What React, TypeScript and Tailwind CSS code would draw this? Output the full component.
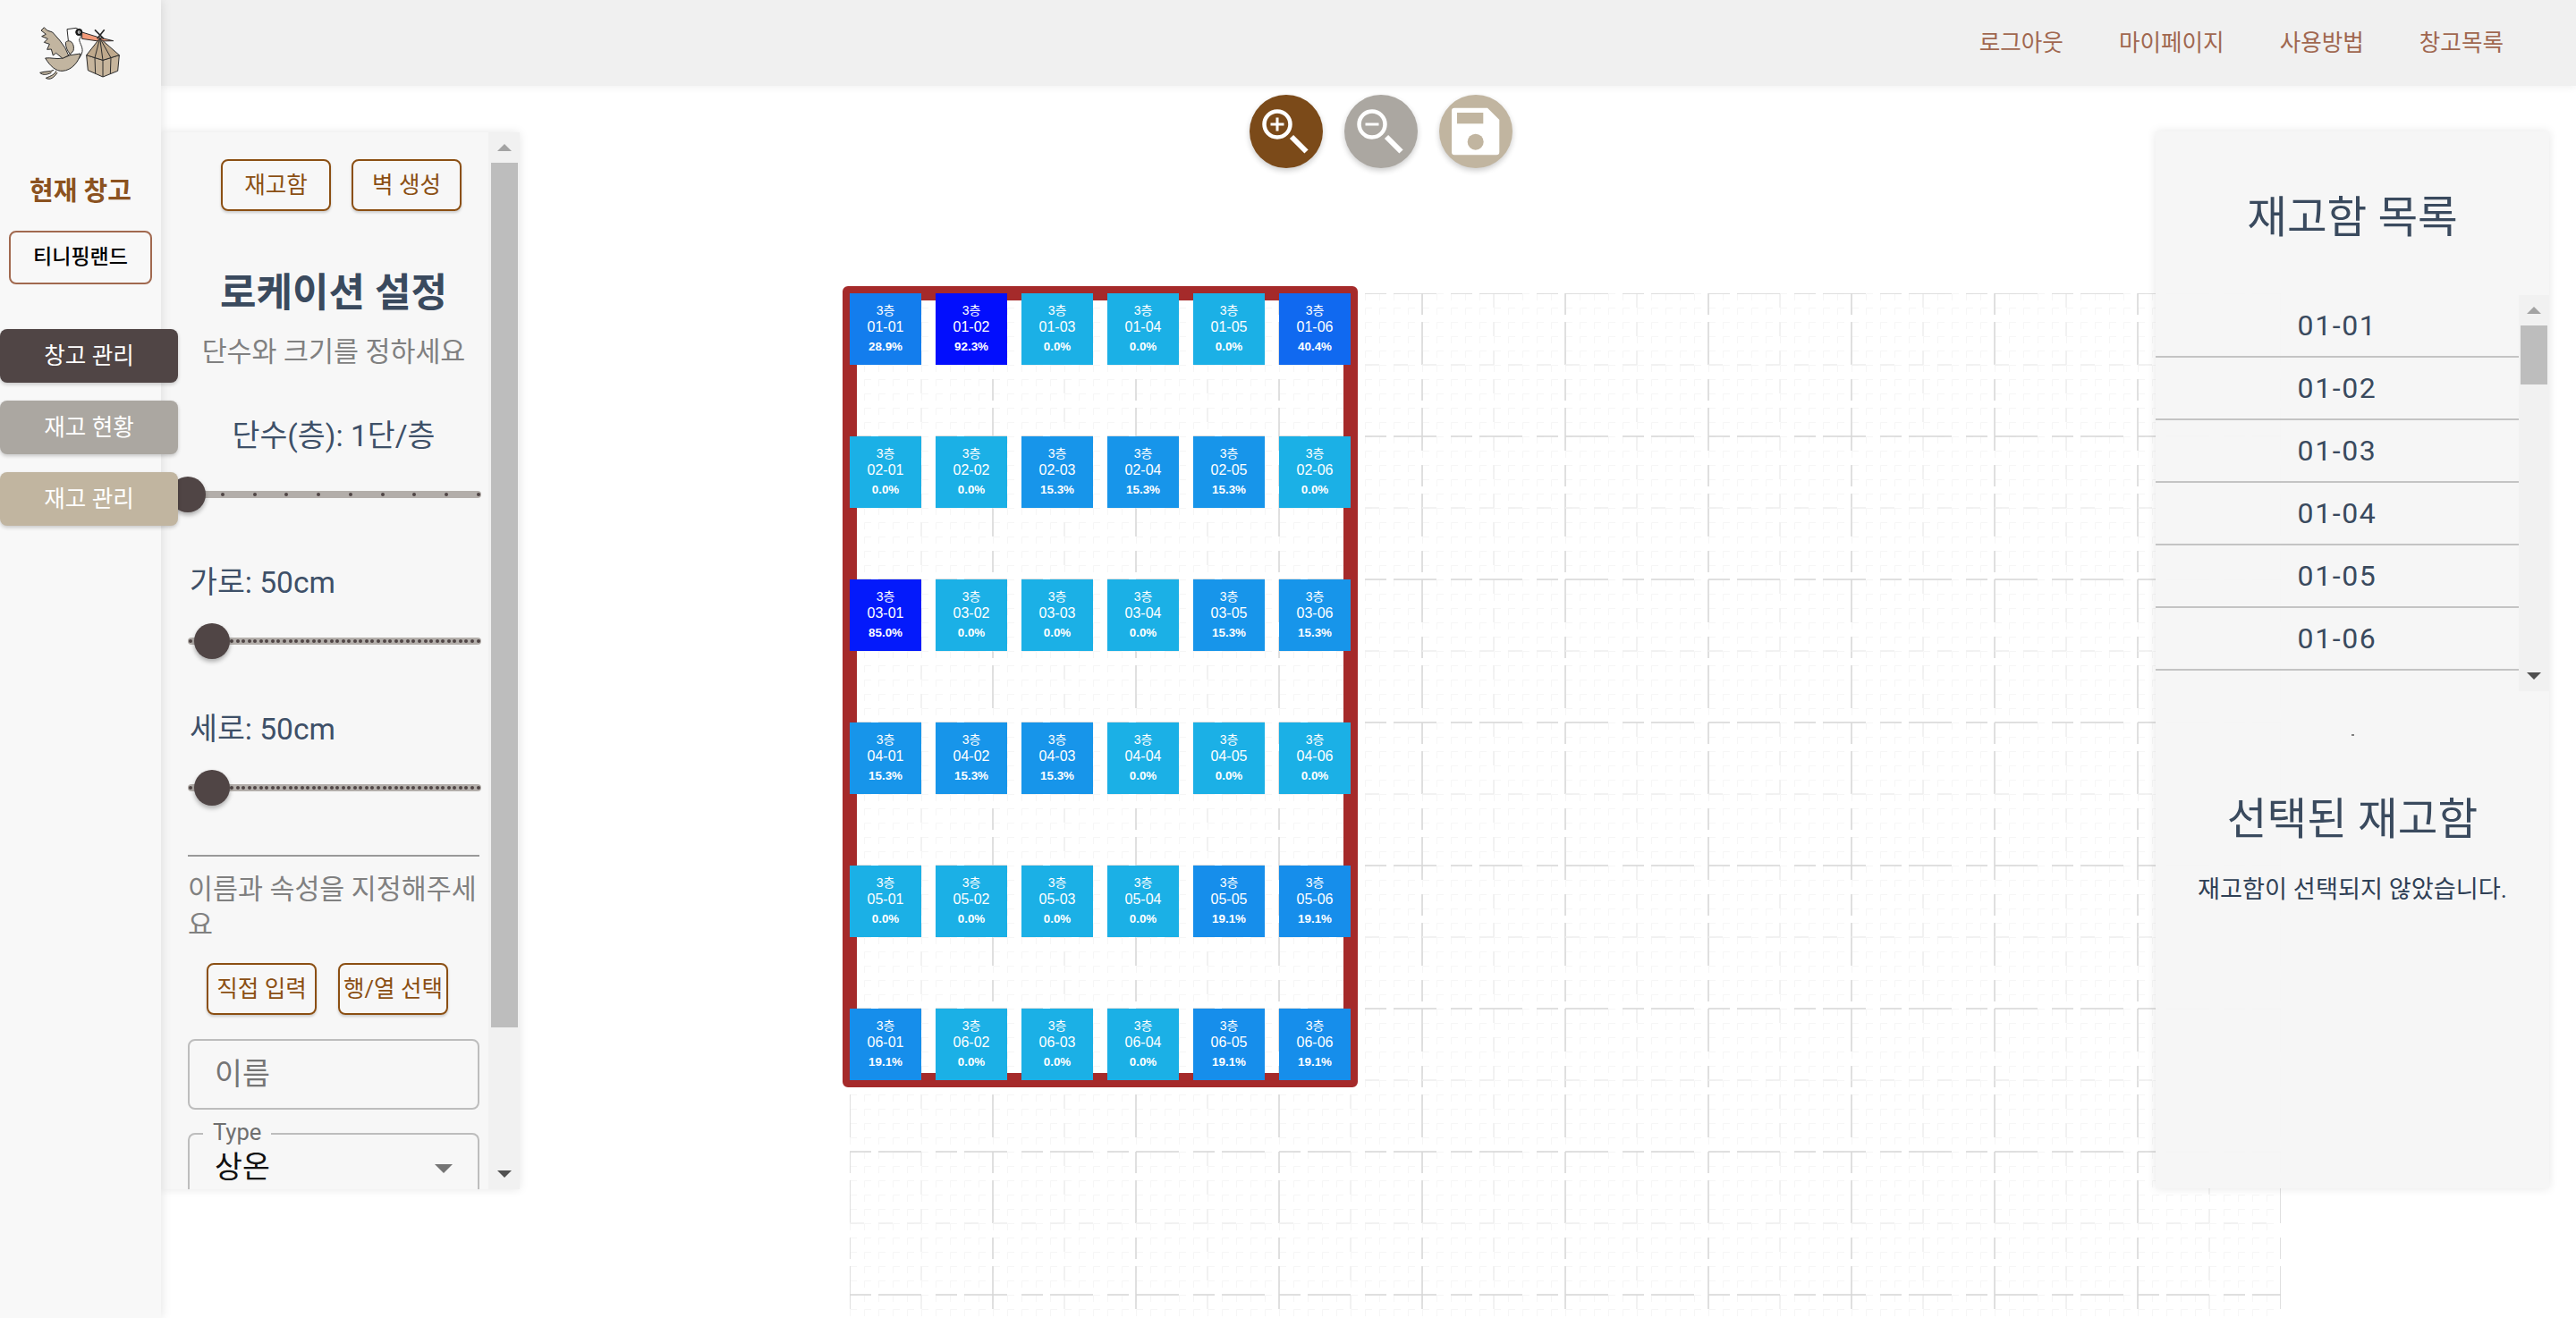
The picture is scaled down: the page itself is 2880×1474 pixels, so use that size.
import React from 'react';

const navButtons = [
  { label: '창고 관리', cls: 'bg-[#504545]' },
  { label: '재고 현황', cls: 'bg-[#aba7a1]' },
  { label: '재고 관리', cls: 'bg-[#c1b5a0]' },
];

const headerLinks = ['로그아웃', '마이페이지', '사용방법', '창고목록'];

const fillRates = [
  [28.9, 92.3, 0, 0, 0, 40.4],
  [0, 0, 15.3, 15.3, 15.3, 0],
  [85, 0, 0, 0, 15.3, 15.3],
  [15.3, 15.3, 15.3, 0, 0, 0],
  [0, 0, 0, 0, 19.1, 19.1],
  [19.1, 0, 0, 0, 19.1, 19.1],
];

const pad = (n: number) => String(n).padStart(2, '0');

// 채움률에 따라 하늘색 -> 파랑
const cellColor = (rate: number) => {
  const p = rate / 100;
  const r = Math.round(27 * (1 - p));
  const g = Math.round(176 * (1 - p));
  const b = Math.round(230 + 25 * p);
  return `rgb(${r},${g},${b})`;
};

const Logo = () => (
  <svg viewBox="0 0 390 270" className="ml-[20px] mt-[10px] w-[130px] h-[90px] shrink-0">
    <g stroke="#2b2b2b" strokeWidth="3" strokeLinejoin="round">
      <path d="M165 68 L195 64 C212 70 216 90 206 102 C206 116 222 130 214 150 C206 172 190 180 176 170 Z" fill="#fff" />
      <path d="M92 165 C110 162 130 170 150 165 L176 155 L210 150 C204 178 180 206 150 208 C128 210 108 192 92 165 Z" fill="#c2b5a0" />
      <path d="M88 62 L98 72 L116 78 L140 105 L158 130 L170 156 L150 166 L128 148 L118 156 L112 135 L98 136 L106 118 L88 112 L100 100 L80 92 L94 85 L78 72 Z" fill="#c2b5a0" />
      <path d="M160 112 C175 98 192 118 186 140 L176 152 C166 142 160 128 160 112 Z" fill="#c2b5a0" />
      <path d="M120 205 C108 212 92 208 74 214 C84 224 100 220 112 214 M128 208 C124 220 112 224 94 232 C108 240 122 230 132 214" fill="#c2b5a0" />
      <path d="M215 78 L270 95 L320 107 L270 108 L215 100 Z" fill="#f29b7a" />
      <circle cx="205" cy="78" r="11" fill="#111" />
      <path d="M230 155 L285 172 L340 155 L335 208 L285 228 L235 206 Z" fill="#c7b59c" />
      <path d="M275 98 L230 155 L285 172 L340 155 Z" fill="#bfa98c" />
      <path d="M275 98 L258 164 M275 98 L285 172 M275 98 L312 164 M258 164 L260 217 M285 172 L285 228 M312 164 L310 218" fill="none" />
      <path d="M258 70 L288 100 M290 70 L266 100" fill="none" strokeWidth="5" />
    </g>
    <circle cx="205" cy="78" r="5" fill="#fff" />
    <circle cx="205" cy="78" r="2.5" fill="#111" />
  </svg>
);

const Sidebar = () => (
  <aside className="relative z-20 flex w-[180px] shrink-0 flex-col bg-[#f8f8f8] shadow-[0_0_12px_rgba(0,0,0,0.12)]">
    <Logo />
    <div className="mt-[94px] text-center text-[29px] font-bold leading-[40px] text-[#8b5220]">현재 창고</div>
    <div className="mx-[10px] mt-[24px] flex h-[60px] w-[160px] items-center justify-center rounded-[8px] border-2 border-[#a1694f] text-[23px] font-medium text-black">
      티니핑랜드
    </div>
    <div className="mt-[50px] flex w-[199px] flex-col gap-[20px]">
      {navButtons.map((b) => (
        <div
          key={b.cls}
          className={`flex h-[60px] items-center justify-center rounded-[8px] text-[25.6px] text-white shadow-[0_2px_4px_rgba(0,0,0,0.2)] ${b.cls}`}
        >
          {b.label}
        </div>
      ))}
    </div>
  </aside>
);

const OutlineButton = ({ label }: { label: string }) => (
  <div className="flex h-[58px] w-[123px] items-center justify-center whitespace-nowrap rounded-[8px] border-2 border-[#8b4f13] text-[25.6px] text-[#8b4f13] shadow-[0_2px_3px_rgba(0,0,0,0.18)]">
    {label}
  </div>
);

const Slider = ({ steps, thumbX, size }: { steps: number; thumbX: number; size: number }) => (
  <div className="relative h-[40px] w-[328px]">
    <div className="absolute left-0 right-0 top-[16px] flex h-[8px] items-center justify-between rounded-full bg-[#b3aeaa] px-[1px]">
      {Array.from({ length: steps }).map((_, i) => (
        <span key={i} className="h-[4px] w-[4px] rounded-full bg-[#504545]" />
      ))}
    </div>
    <div
      className="absolute top-1/2 -translate-x-1/2 -translate-y-1/2 rounded-full bg-[#504545] shadow-[0_3px_5px_rgba(0,0,0,0.3)]"
      style={{ left: thumbX, width: size, height: size }}
    />
  </div>
);

const ScrollArrow = ({ dir, dark }: { dir: 'up' | 'down'; dark?: boolean }) => (
  <svg viewBox="0 0 16 8" className="h-[8px] w-[16px]">
    <path d={dir === 'up' ? 'M0 8 L8 0 L16 8 Z' : 'M0 0 L16 0 L8 8 Z'} fill={dark ? '#505050' : '#a3a3a3'} />
  </svg>
);

const LeftPanel = () => (
  <section className="relative z-10 mt-[52px] flex h-[1182px] w-[401px] shrink-0 overflow-hidden bg-[#f7f7f7] shadow-[0_0_10px_rgba(0,0,0,0.1)]">
    <div className="w-[366px] shrink-0 overflow-hidden pl-[30px] pr-[10px]">
      <div className="ml-[37px] mt-[30px] flex gap-[23px]">
        <div className="h-[59px]"><OutlineButton label="재고함" /></div>
        <div className="h-[59px]"><OutlineButton label="벽 생성" /></div>
      </div>
      <h2 className="mt-[61px] whitespace-nowrap text-center text-[44px] font-bold leading-[60px] text-[#3a4a5e]">로케이션 설정</h2>
      <p className="mt-[14px] whitespace-nowrap text-center text-[30.4px] leading-[44px] text-[#808080]">단수와 크기를 정하세요</p>
      <div className="mt-[48px] text-center text-[33.6px] leading-[48px] text-[#3e5068]">단수(층): 1단/층</div>
      <div className="mt-[21px]"><Slider steps={10} thumbX={0} size={40} /></div>
      <div className="ml-[2px] mt-[55px] text-[33.6px] leading-[48px] text-[#3e5068]">가로: 50cm</div>
      <div className="mt-[21px]"><Slider steps={50} thumbX={27} size={40} /></div>
      <div className="ml-[2px] mt-[55px] text-[33.6px] leading-[48px] text-[#3e5068]">세로: 50cm</div>
      <div className="mt-[21px]"><Slider steps={50} thumbX={27} size={40} /></div>
      <div className="mt-[55px] h-[2px] bg-[#999999]" />
      <p className="mt-[17px] text-[30.4px] leading-[40px] text-[#808080]">이름과 속성을 지정해주세요</p>
      <div className="ml-[21px] mt-[22px] flex gap-[24px]">
        <OutlineButton label="직접 입력" />
        <OutlineButton label="행/열 선택" />
      </div>
      <div className="mt-[27px] flex h-[79px] items-center rounded-[8px] border-2 border-[#bdbdbd] pl-[28px] pt-[2px] text-[33.6px] text-[#757575]">이름</div>
      <div className="relative mt-[26px] flex h-[90px] items-start justify-between rounded-[8px] border-2 border-[#bdbdbd] pl-[28px] pr-[28px] pt-[15px] text-[33.6px] leading-[44px] text-[#111]">
        <span className="absolute left-[15px] top-[-18px] bg-[#f7f7f7] px-[11px] text-[25.6px] leading-[30px] text-[#6f6f6f]">Type</span>
        <span>상온</span>
        <svg viewBox="0 0 20 10" className="mt-[18px] h-[10px] w-[20px]"><path d="M0 0 L20 0 L10 10 Z" fill="#757575" /></svg>
      </div>
    </div>
    <div className="relative flex w-[35px] shrink-0 flex-col items-center bg-[#f1f1f1]">
      <div className="flex h-[34px] items-center"><ScrollArrow dir="up" /></div>
      <div className="h-[967px] w-[30px] bg-[#bdbdbd]" />
      <div className="mt-auto flex h-[34px] items-center"><ScrollArrow dir="down" dark /></div>
    </div>
  </section>
);

const ToolButton = ({ cls, children }: { cls: string; children: React.ReactNode }) => (
  <div className={`h-[82px] w-[82px] rounded-full shadow-[0_3px_6px_rgba(0,0,0,0.2)] ${cls}`}>
    <svg viewBox="0 0 82 82" className="h-full w-full">{children}</svg>
  </div>
);

const Magnifier = ({ plus }: { plus?: boolean }) => (
  <g fill="none" stroke="#fff">
    <circle cx="31" cy="33" r="14.5" strokeWidth="4.5" />
    <path d="M47 47 L63.5 63.5" strokeWidth="6" />
    <path d="M23.5 33 H38.5" strokeWidth="3" />
    {plus && <path d="M31 25.5 V40.5" strokeWidth="3" />}
  </g>
);

const Grid = () => (
  <svg width="1600" height="1146" className="absolute left-0 top-0">
    <defs>
      <pattern id="minor" width="16" height="16" patternUnits="userSpaceOnUse">
        <path d="M0.5 8 V0.5 H8" fill="none" stroke="#f6f6f6" strokeWidth="1" />
      </pattern>
    </defs>
    <rect width="1600" height="1146" fill="url(#minor)" />
    {Array.from({ length: 21 }).map((_, k) => (
      <line
        key={`v${k}`}
        x1={k * 80}
        x2={k * 80}
        y1={0}
        y2={1146}
        stroke={k % 2 === 0 ? '#d6d6d6' : '#eeeeee'}
        strokeWidth="1.5"
        strokeDasharray={k % 2 === 0 ? '24 8 48 16' : '16 16'}
      />
    ))}
    {Array.from({ length: 15 }).map((_, k) => (
      <line
        key={`h${k}`}
        x1={0}
        x2={1600}
        y1={k * 80}
        y2={k * 80}
        stroke={k % 2 === 0 ? '#d6d6d6' : '#eeeeee'}
        strokeWidth="1.5"
        strokeDasharray={k % 2 === 0 ? '24 8 48 16' : '16 16'}
      />
    ))}
  </svg>
);

const Canvas = () => (
  <div className="absolute left-[369px] top-[232px] h-[1146px] w-[1600px] font-['Liberation_Sans','Noto_Sans_CJK_KR',sans-serif] text-white">
    <Grid />
    <div className="absolute left-[-8px] top-[-8px] h-[896px] w-[576px] rounded-[6px] border-[16px] border-[#a52a2a]" />
    {fillRates.map((row, r) =>
      row.map((rate, c) => (
        <div
          key={`${r}-${c}`}
          className="absolute flex h-[80px] w-[80px] flex-col items-center pt-[9px] text-center"
          style={{ left: c * 96, top: r * 160, background: cellColor(rate) }}
        >
          <div className="text-[14px] leading-[20px]">3층</div>
          <div className="-mt-[1px] text-[16px] leading-[20px]">{`${pad(r + 1)}-${pad(c + 1)}`}</div>
          <div className="mt-[2px] text-[13.4px] font-bold leading-[20px]">{`${rate.toFixed(1)}%`}</div>
        </div>
      )),
    )}
  </div>
);

const RightPanel = () => (
  <section className="relative z-10 ml-auto mr-[30px] mt-[51px] flex h-[1182px] w-[440px] shrink-0 flex-col items-center bg-[#f6f6f6]/95 shadow-[0_0_10px_rgba(0,0,0,0.1)]">
    <h2 className="mt-[65px] text-center text-[48.6px] leading-[64px] text-[#3a4a5e]">재고함 목록</h2>
    <div className="mt-[54px] flex h-[443px] w-full shrink-0">
      <ul className="h-full w-[406px] overflow-hidden">
        {[1, 2, 3, 4, 5, 6, 7].map((n) => (
          <li
            key={n}
            className="flex h-[70px] items-center justify-center border-b-2 border-[#c4c4c4] text-[32px] tracking-[1.6px] text-[#3a4a5e]"
          >
            {`01-${pad(n)}`}
          </li>
        ))}
      </ul>
      <div className="flex w-[34px] flex-col items-center bg-[#f1f1f1]">
        <div className="flex h-[34px] items-center"><ScrollArrow dir="up" /></div>
        <div className="h-[66px] w-[30px] bg-[#bdbdbd]" />
        <div className="mt-auto flex h-[34px] items-center"><ScrollArrow dir="down" dark /></div>
      </div>
    </div>
    <div className="mt-[48px] h-[2px] w-[3px] bg-[#808080]" />
    <h2 className="mt-[62px] text-center text-[48.6px] leading-[64px] text-[#3a4a5e]">선택된 재고함</h2>
    <p className="mt-[26px] text-center text-[27.2px] leading-[40px] text-[#2f4055]">재고함이 선택되지 않았습니다.</p>
  </section>
);

export default function App() {
  return (
    <div className="flex h-screen w-full overflow-hidden bg-white font-['Roboto','Noto_Sans_CJK_KR',sans-serif]">
      <Sidebar />
      <div className="flex min-w-0 flex-1 flex-col">
        <header className="relative z-0 flex h-[96px] shrink-0 items-center justify-end gap-[62px] bg-[#f0f0f0] pr-[81px] text-[25.6px] text-[#a0674f] shadow-[0_2px_8px_rgba(0,0,0,0.06)]">
          {headerLinks.map((l) => (
            <span key={l}>{l}</span>
          ))}
        </header>
        <div className="relative flex flex-1">
          <LeftPanel />
          <div className="relative">
            <div className="ml-[816px] mt-[10px] flex gap-[24px]">
              <ToolButton cls="bg-[#7b4a19]"><Magnifier plus /></ToolButton>
              <ToolButton cls="bg-[#aba7a1]"><Magnifier /></ToolButton>
              <ToolButton cls="bg-[#c1b5a0]">
                <path d="M17 14.7 H54 L67.3 28 V64 a3.3 3.3 0 0 1 -3.3 3.3 H17 a3 3 0 0 1 -3 -3 V17.7 a3 3 0 0 1 3 -3 Z" fill="#fff" />
                <rect x="20" y="20" width="29.3" height="12.3" fill="#c1b5a0" />
                <circle cx="40.7" cy="52.7" r="9" fill="#c1b5a0" />
              </ToolButton>
            </div>
            <Canvas />
          </div>
          <RightPanel />
        </div>
      </div>
    </div>
  );
}
